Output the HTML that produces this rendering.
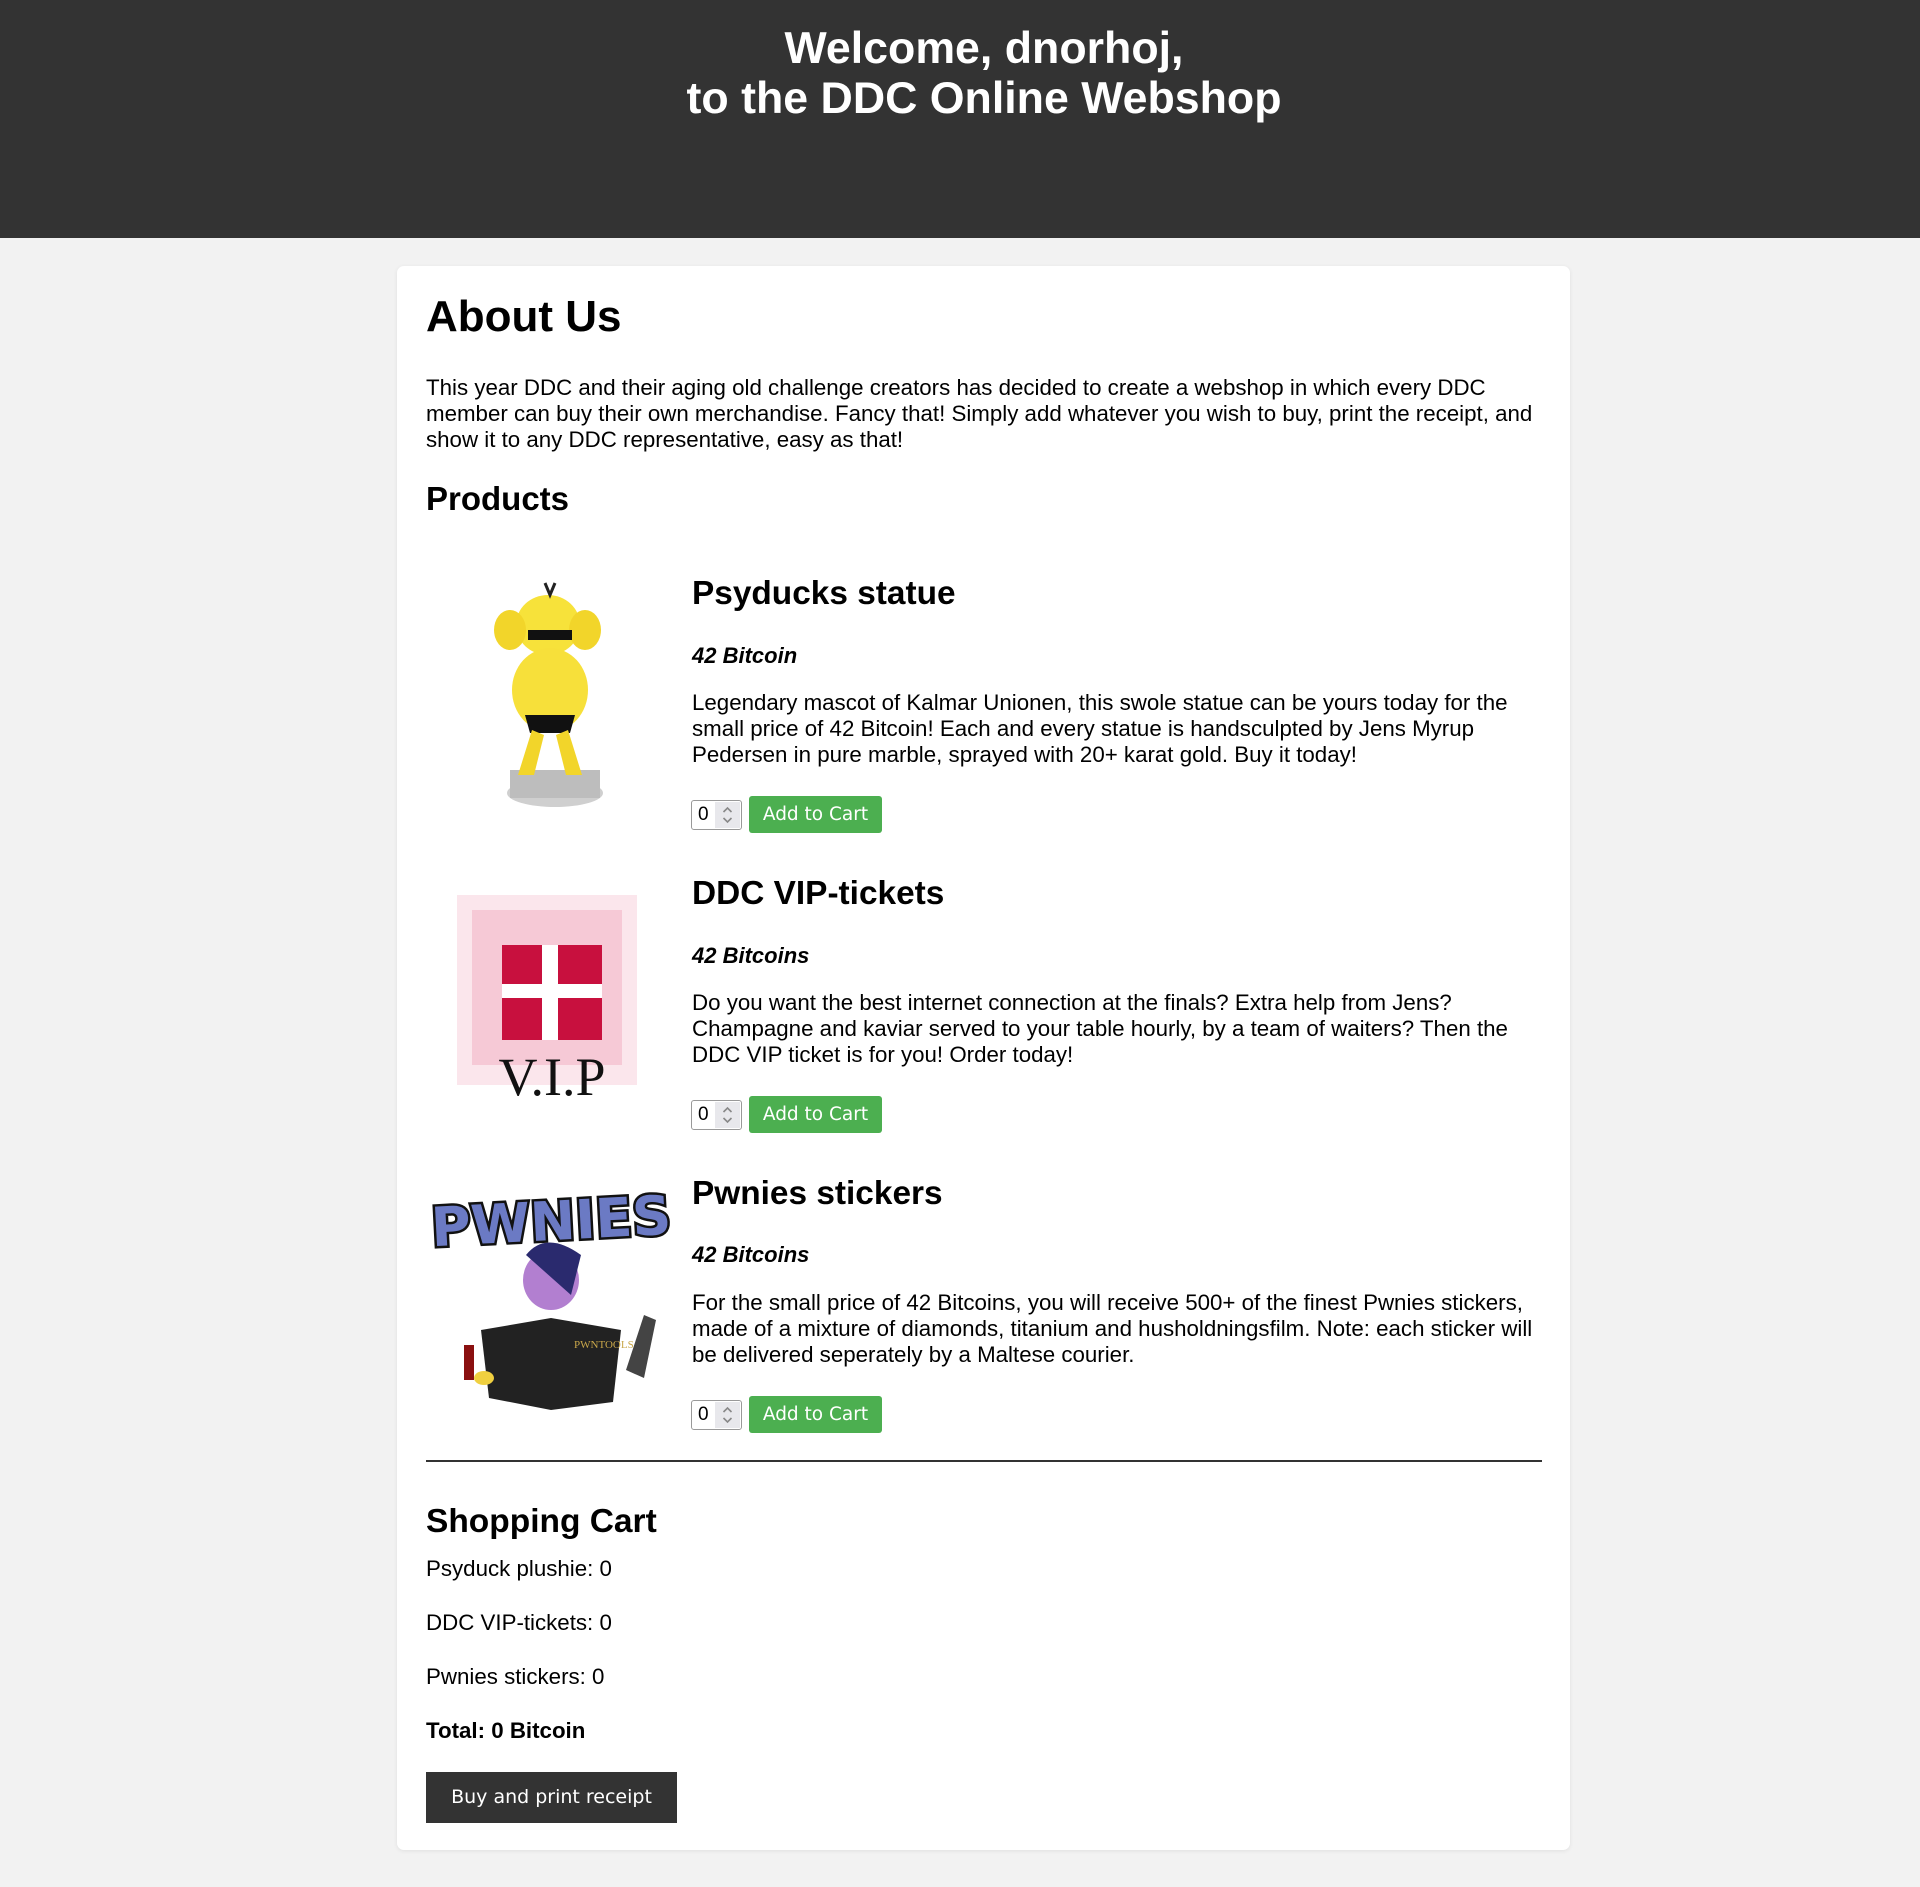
<!DOCTYPE html>
<html><head><meta charset="utf-8">
<style>
*{margin:0;padding:0;box-sizing:border-box}
body{width:1920px;height:1887px;background:#f2f2f2;font-family:"Liberation Sans",Arial,sans-serif;color:#000;position:relative;overflow:hidden}
.hdr{position:absolute;left:0;top:0;width:1920px;height:238px;background:#333;color:#fff;text-align:center;font-weight:bold;font-size:44.7px;line-height:50px;padding-top:24px;padding-left:48px}
.card{position:absolute;left:397px;top:266px;width:1173px;height:1584px;background:#fff;border-radius:7px;box-shadow:0 1px 4px rgba(0,0,0,.08)}
.a{position:absolute;white-space:nowrap}
p.t{position:absolute;font-size:22.3px;line-height:26px;white-space:normal}
h1,h2,h3{position:absolute;font-weight:bold;white-space:nowrap}
.price{position:absolute;font-weight:bold;font-style:italic;font-size:22px}
.inp{position:absolute;width:51px;height:30px;border:1px solid #999;border-radius:3px;background:#fff;font-size:19px;line-height:28px;padding-left:6px}
.inp span.sp{position:absolute;right:1px;top:1px;width:25px;height:26px;background:#e8e8ec}
.btn{position:absolute;width:133px;height:37px;background:#4caf50;border-radius:3px;color:#fff;font-family:"DejaVu Sans",sans-serif;font-size:18.5px;line-height:37px;text-align:center}
.cl{position:absolute;font-size:22.3px;left:426px}
</style></head><body>
<div class="hdr">Welcome, dnorhoj,<br>to the DDC Online Webshop</div>
<div class="card"></div>
<h1 style="left:426px;top:292px;font-size:44px">About Us</h1>
<p class="t" style="left:426px;top:375px;width:1120px">This year DDC and their aging old challenge creators has decided to create a webshop in which every DDC member can buy their own merchandise. Fancy that! Simply add whatever you wish to buy, print the receipt, and show it to any DDC representative, easy as that!</p>
<h2 style="left:426px;top:480px;font-size:33px">Products</h2>

<svg width="0" height="0" style="position:absolute"><defs><g id="spin"><path d="M-4 -3 l4 -4 l4 4 M-4 3 l4 4 l4 -4" stroke="#888" stroke-width="1.6" fill="none"/></g></defs></svg>

<!-- product 1 -->
<svg class="a" style="left:470px;top:575px" width="170" height="240" viewBox="0 0 170 240">
<ellipse cx="85" cy="218" rx="48" ry="14" fill="#cfcfcf"/><rect x="40" y="195" width="90" height="28" fill="#bdbdbd"/>
<ellipse cx="78" cy="50" rx="32" ry="30" fill="#f7e23a"/>
<ellipse cx="40" cy="55" rx="16" ry="20" fill="#f2d52a"/><ellipse cx="115" cy="55" rx="16" ry="20" fill="#f2d52a"/>
<ellipse cx="80" cy="115" rx="38" ry="42" fill="#f7e03a"/>
<rect x="58" y="55" width="44" height="10" fill="#111"/>
<path d="M55 140 h50 l-5 18 h-40z" fill="#111"/>
<path d="M62 155 l-14 45 h16 l10-40z M98 155 l14 45 h-16 l-10-40z" fill="#f2d52a"/>
<path d="M75 8 l5 12 l5-12" stroke="#222" stroke-width="3" fill="none"/>
</svg>
<h3 style="left:692px;top:575px;font-size:33.4px">Psyducks statue</h3>
<div class="price" style="left:692px;top:643px">42 Bitcoin</div>
<p class="t" style="left:692px;top:690px;width:860px">Legendary mascot of Kalmar Unionen, this swole statue can be yours today for the small price of 42 Bitcoin! Each and every statue is handsculpted by Jens Myrup Pedersen in pure marble, sprayed with 20+ karat gold. Buy it today!</p>
<div class="inp" style="left:691px;top:800px">0<span class="sp"><svg width="25" height="26"><use href="#spin" x="12.5" y="13"/></svg></span></div>
<div class="btn" style="left:749px;top:796px">Add to Cart</div>

<!-- product 2 -->
<svg class="a" style="left:447px;top:885px" width="210" height="220" viewBox="0 0 210 220">
<rect x="10" y="10" width="180" height="190" fill="#fbe6ec"/>
<rect x="25" y="25" width="150" height="155" fill="#f6c9d6"/>
<rect x="55" y="60" width="100" height="95" fill="#c8103e"/>
<rect x="95" y="60" width="16" height="95" fill="#fff"/><rect x="55" y="99" width="100" height="14" fill="#fff"/>
<text x="105" y="210" font-family="Liberation Serif,serif" font-size="54" text-anchor="middle" fill="#111">V.I.P</text>
</svg>
<h3 style="left:692px;top:875px;font-size:33.4px">DDC VIP-tickets</h3>
<div class="price" style="left:692px;top:943px">42 Bitcoins</div>
<p class="t" style="left:692px;top:990px;width:860px">Do you want the best internet connection at the finals? Extra help from Jens? Champagne and kaviar served to your table hourly, by a team of waiters? Then the DDC VIP ticket is for you! Order today!</p>
<div class="inp" style="left:691px;top:1100px">0<span class="sp"><svg width="25" height="26"><use href="#spin" x="12.5" y="13"/></svg></span></div>
<div class="btn" style="left:749px;top:1096px">Add to Cart</div>

<!-- product 3 -->
<svg class="a" style="left:426px;top:1170px" width="250" height="240" viewBox="0 0 250 240">
<text x="125" y="70" font-family="DejaVu Sans,sans-serif" font-weight="bold" font-size="54" text-anchor="middle" fill="#6b7ac4" stroke="#111" stroke-width="5" paint-order="stroke" transform="rotate(-3 125 50)">PWNIES</text>
<ellipse cx="125" cy="110" rx="28" ry="30" fill="#b27fd0"/>
<path d="M100 85 q20-25 55 0 l-10 40 z" fill="#2a2a6e"/>
<path d="M55 160 l70-12 l70 12 l-8 72 l-62 8 l-62-12z" fill="#222"/>
<text x="148" y="178" font-family="Liberation Serif,serif" font-size="11" fill="#c9a74a">PWNTOOLS</text>
<path d="M200 200 l18-55 l12 5 l-12 58z" fill="#444"/>
<rect x="38" y="175" width="10" height="35" fill="#8a1010"/>
<ellipse cx="58" cy="208" rx="10" ry="7" fill="#f0d040"/>
</svg>
<h3 style="left:692px;top:1175px;font-size:33.4px">Pwnies stickers</h3>
<div class="price" style="left:692px;top:1242px">42 Bitcoins</div>
<p class="t" style="left:692px;top:1290px;width:860px">For the small price of 42 Bitcoins, you will receive 500+ of the finest Pwnies stickers, made of a mixture of diamonds, titanium and husholdningsfilm. Note: each sticker will be delivered seperately by a Maltese courier.</p>
<div class="inp" style="left:691px;top:1400px">0<span class="sp"><svg width="25" height="26"><use href="#spin" x="12.5" y="13"/></svg></span></div>
<div class="btn" style="left:749px;top:1396px">Add to Cart</div>

<div class="a" style="left:426px;top:1460px;width:1116px;height:2px;background:#333"></div>
<h2 style="left:426px;top:1503px;font-size:33.5px">Shopping Cart</h2>
<div class="cl" style="top:1556px">Psyduck plushie: 0</div>
<div class="cl" style="top:1610px">DDC VIP-tickets: 0</div>
<div class="cl" style="top:1664px">Pwnies stickers: 0</div>
<div class="cl" style="top:1718px;font-weight:bold">Total: 0 Bitcoin</div>
<div class="a" style="left:426px;top:1772px;width:251px;height:51px;background:#333;color:#fff;font-family:'DejaVu Sans',sans-serif;font-size:19px;line-height:51px;text-align:center">Buy and print receipt</div>
</body></html>
